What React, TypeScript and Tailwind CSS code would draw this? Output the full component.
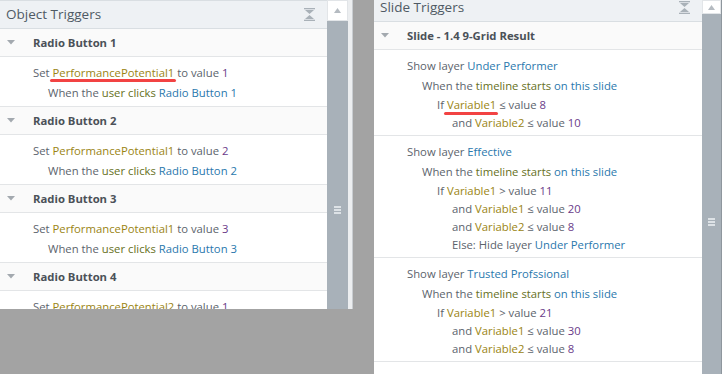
import React from "react";

type Kind = "p" | "v" | "n" | "o" | "e";
type Seg = [string, Kind, boolean?];
type Line = { indent: number; segs: Seg[] };

const color: Record<Kind, string> = {
  p: "text-[#5b636c]",
  v: "text-[#9a8412]",
  n: "text-[#6a3b89]",
  o: "text-[#2a78ad]",
  e: "text-[#66701c]",
};

const objectRows = [1, 2, 3, 4].map((i) => ({
  title: `Radio Button ${i}`,
  lines: [
    {
      indent: 0,
      segs: [
        ["Set ", "p"],
        [i === 4 ? "PerformancePotential2" : "PerformancePotential1", "v", i === 1],
        [" to value ", "p"],
        [String(i === 4 ? 1 : i), "n"],
      ],
    },
    {
      indent: 1,
      segs: [
        ["When the ", "p"],
        ["user clicks", "e"],
        [" ", "p"],
        [`Radio Button ${i}`, "o"],
      ],
    },
  ] as Line[],
}));

const when: Line = {
  indent: 1,
  segs: [
    ["When the ", "p"],
    ["timeline starts", "e"],
    [" ", "p"],
    ["on this slide", "o"],
  ],
};

const cond = (indent: number, lead: string, v: string, op: string, n: string, mark = false): Line => ({
  indent,
  segs: [
    [lead + " ", "p"],
    [v, "v", mark],
    [` ${op} value `, "p"],
    [n, "n"],
  ],
});

const show = (layer: string): Line => ({
  indent: 0,
  segs: [
    ["Show layer ", "p"],
    [layer, "o"],
  ],
});

const slideBlocks: Line[][] = [
  [show("Under Performer"), when, cond(2, "If", "Variable1", "≤", "8", true), cond(3, "and", "Variable2", "≤", "10")],
  [
    show("Effective"),
    when,
    cond(2, "If", "Variable1", ">", "11"),
    cond(3, "and", "Variable1", "≤", "20"),
    cond(3, "and", "Variable2", "≤", "8"),
    { indent: 3, segs: [["Else: Hide layer ", "p"], ["Under Performer", "o"]] },
  ],
  [
    show("Trusted Profssional"),
    when,
    cond(2, "If", "Variable1", ">", "21"),
    cond(3, "and", "Variable1", "≤", "30"),
    cond(3, "and", "Variable2", "≤", "8"),
  ],
  [show("Effective"), when],
];

const pad = ["pl-[33px]", "pl-[48px]", "pl-[63px]", "pl-[78px]"];

function TextLine({ line, first }: { line: Line; first: boolean }) {
  return (
    <div className={`${pad[line.indent]} whitespace-pre ${first || line.indent === 1 ? "h-[20px] leading-[20px]" : "h-[18px] leading-[18px]"}`}>
      {line.segs.map(([t, k, mark], j) => (
        <span key={j} className={`${color[k]} ${mark ? "relative inline-block" : ""}`}>
          {t}
          {mark && <span className="absolute left-[-3px] right-[-2px] top-[16px] h-[3px] rounded-full bg-[#f24343]" />}
        </span>
      ))}
    </div>
  );
}

function Caret() {
  return (
    <svg width="8" height="5" viewBox="0 0 8 5" className="ml-[7px] mr-[18px]">
      <polygon points="0,0 8,0 4,4.5" fill="#a3a9af" />
    </svg>
  );
}

function CollapseIcon() {
  return (
    <svg width="11" height="13" viewBox="0 0 11 13">
      <rect x="0" y="0" width="11" height="1.3" fill="#a9b1b8" />
      <polygon points="1,2 10,2 5.5,6" fill="#a9b1b8" />
      <polygon points="1,11 10,11 5.5,7" fill="#a9b1b8" />
      <rect x="0" y="11.7" width="11" height="1.3" fill="#a9b1b8" />
    </svg>
  );
}

function Header({ title }: { title: string }) {
  return (
    <div className="h-[29px] shrink-0 flex items-center justify-between pl-[6px] pr-[12px] bg-[#eef1f4] border-t border-b border-[#d9dee2]">
      <span className="text-[13.5px] text-[#4f5a64]">{title}</span>
      <CollapseIcon />
    </div>
  );
}

function RowHead({ title }: { title: string }) {
  return (
    <div className="h-[28px] shrink-0 flex items-center bg-[#fafafa] border-b border-[#e3e5e7]">
      <Caret />
      <span className="pt-[2px] font-bold text-[#4b5158]">{title}</span>
    </div>
  );
}

function Block({ lines }: { lines: Line[] }) {
  return (
    <div className="shrink-0 pt-[6px] pb-[3px] bg-white border-b border-[#e3e5e7]">
      {lines.map((l, i) => (
        <TextLine key={i} line={l} first={i === 0} />
      ))}
    </div>
  );
}

function Scrollbar({ top, gripAt }: { top: string; gripAt: string }) {
  return (
    <div className="flex flex-col bg-[#a8b1b9] w-full h-full">
      <div className={`${top} shrink-0 bg-white border border-[#e2e5e8] flex items-center justify-center`}>
        <svg width="7" height="5" viewBox="0 0 7 5">
          <polygon points="0,5 7,5 3.5,0" fill="#b5bbc1" />
        </svg>
      </div>
      <div className={`${gripAt} flex flex-col items-center gap-[1px]`}>
        <div className="w-[7px] h-[2px] bg-[#dde2e6]" />
        <div className="w-[7px] h-[2px] bg-[#dde2e6]" />
        <div className="w-[7px] h-[2px] bg-[#dde2e6]" />
      </div>
    </div>
  );
}

export default function App() {
  return (
    <div className="w-[722px] h-[374px] bg-[#a3a3a3] flex overflow-hidden text-[11.3px] font-['Open_Sans',sans-serif]">
      {/* Object triggers */}
      <div className="w-[353px] h-[309px] flex shrink-0">
        <div className="w-[327px] flex flex-col overflow-hidden bg-white">
          <Header title="Object Triggers" />
          {objectRows.map((r) => (
            <React.Fragment key={r.title}>
              <RowHead title={r.title} />
              <Block lines={r.lines} />
            </React.Fragment>
          ))}
        </div>
        <div className="w-[21px]">
          <Scrollbar top="h-[21px]" gripAt="mt-[185px]" />
        </div>
        <div className="w-[5px] bg-[#eceef0] border-r border-[#c9cdd1]" />
      </div>

      {/* Slide triggers */}
      <div className="ml-[21px] w-[348px] h-full flex shrink-0 bg-white">
        <div className="w-[328px] h-full overflow-hidden">
          <div className="-mt-[7px] flex flex-col">
            <Header title="Slide Triggers" />
            <RowHead title="Slide - 1.4 9-Grid Result" />
            {slideBlocks.map((b, i) => (
              <Block key={i} lines={b} />
            ))}
          </div>
        </div>
        <div className="w-[19px] h-full">
          <Scrollbar top="h-[14px]" gripAt="mt-[204px]" />
        </div>
        <div className="w-[1px] bg-[#8e969d]" />
      </div>
    </div>
  );
}
